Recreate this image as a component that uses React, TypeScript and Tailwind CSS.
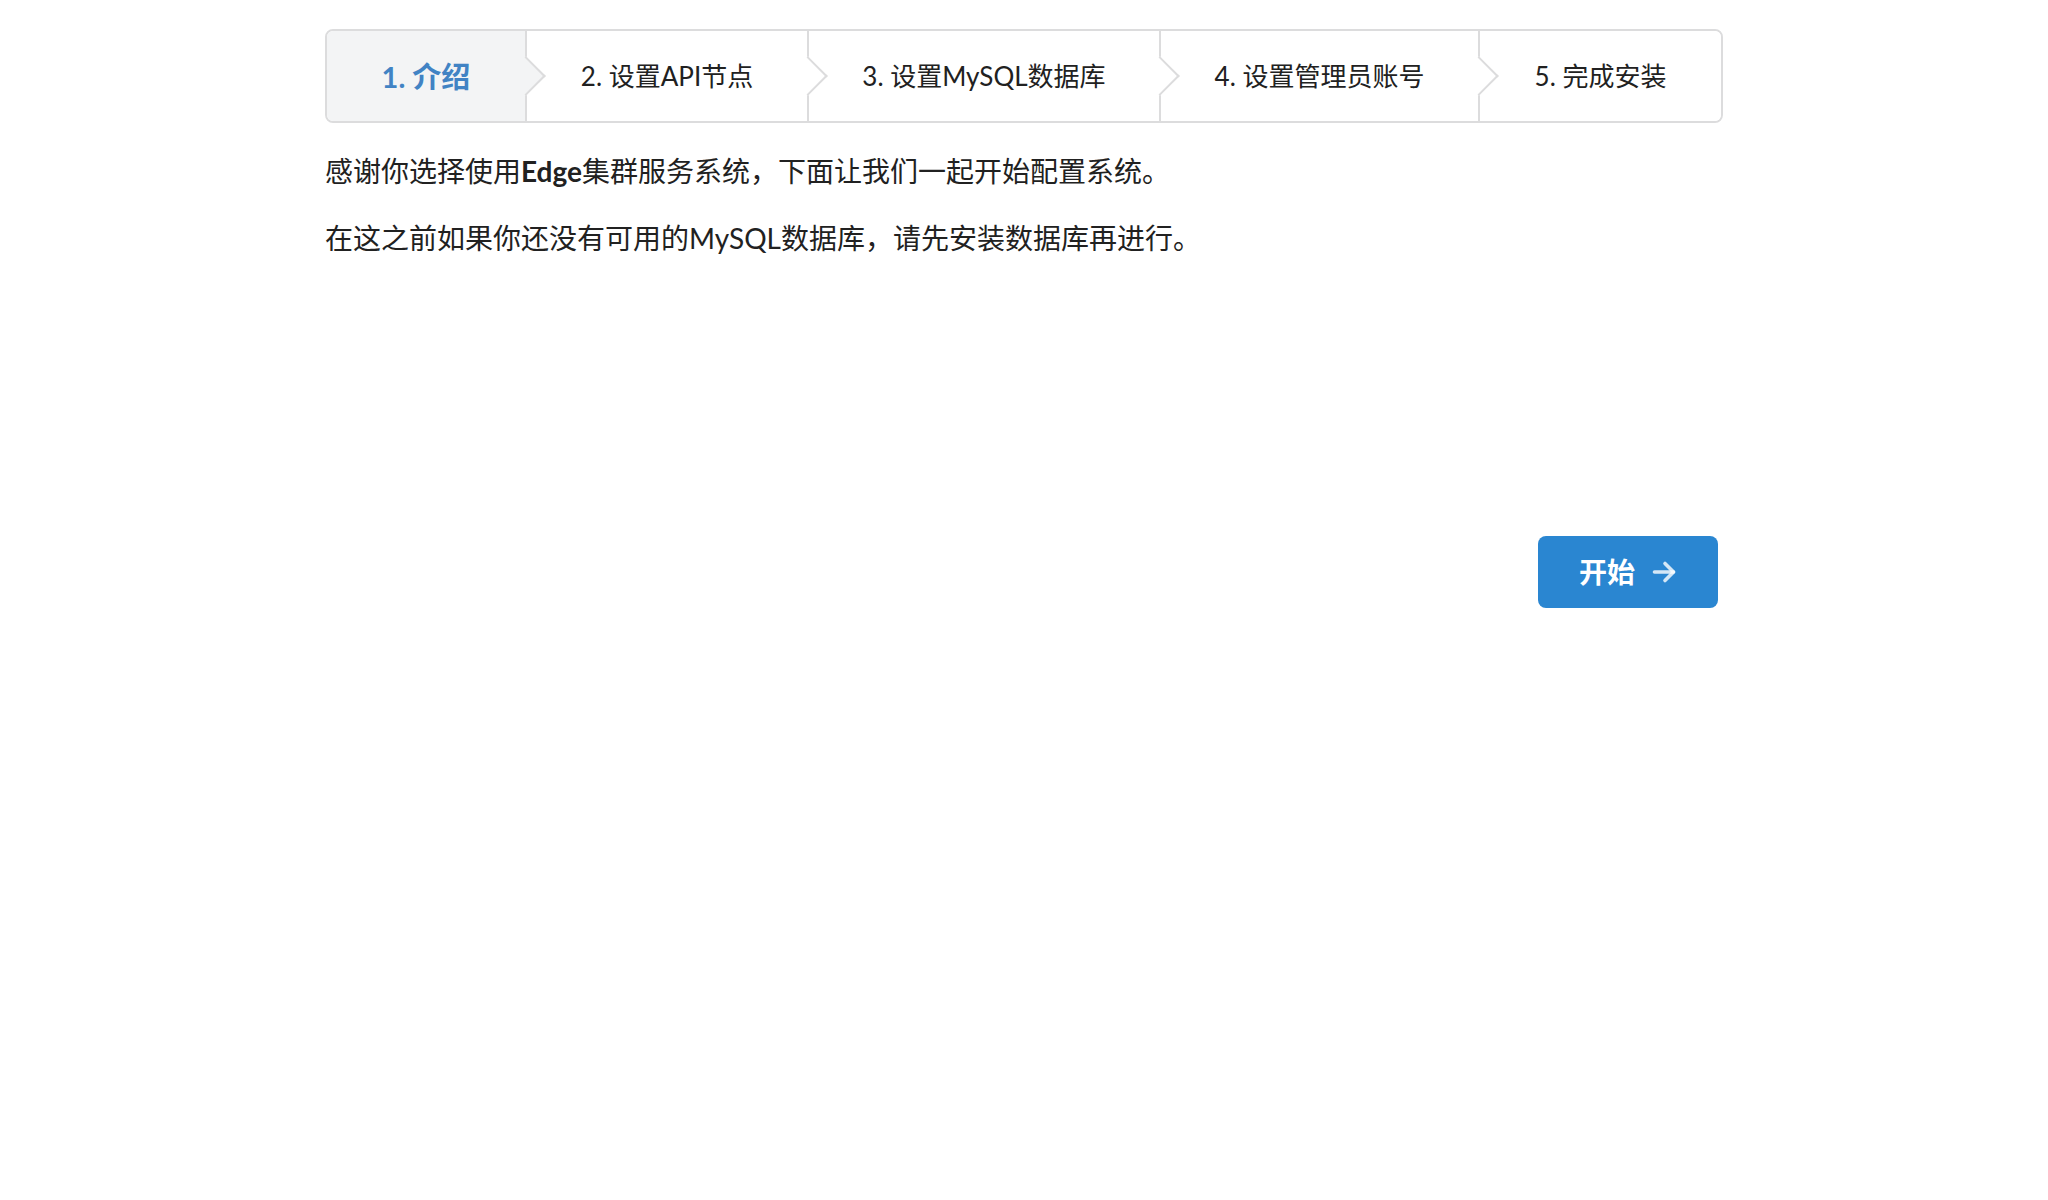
import React from "react";

const steps = [
  { label: "1. 介绍", width: "w-[200px]", z: "z-50" },
  { label: "2. 设置API节点", width: "w-[282px]", z: "z-40" },
  { label: "3. 设置MySQL数据库", width: "w-[352px]", z: "z-30" },
  { label: "4. 设置管理员账号", width: "w-[319px]", z: "z-20" },
  { label: "5. 完成安装", width: "w-[241px]", z: "z-10" },
];

function Steps() {
  return (
    <div className="flex h-[94px] w-[1398px] rounded-[8px] border-2 border-[#dcdcdd] overflow-hidden">
      {steps.map((step, i) => {
        const active = i === 0;
        const last = i === steps.length - 1;
        return (
          <div
            key={step.label}
            className={
              "relative flex items-center justify-center shrink-0 " +
              step.width +
              " " +
              step.z +
              (last ? "" : " border-r-2 border-[#dcdcdd]") +
              (active ? " bg-[#f3f4f5]" : " bg-white")
            }
          >
            <span
              className={
                "leading-none " +
                (active
                  ? "text-[29px] font-bold text-[#4183c4]"
                  : "text-[26px] text-[#212121]")
              }
            >
              {step.label}
            </span>
            {/* arrow to the next step */}
            {!last && (
              <div
                className={
                  "absolute top-1/2 right-[-1px] w-[28px] h-[28px] translate-x-1/2 -translate-y-1/2 rotate-45 border-t-2 border-r-2 border-[#dcdcdd] " +
                  (active ? "bg-[#f3f4f5]" : "bg-white")
                }
              />
            )}
          </div>
        );
      })}
    </div>
  );
}

export default function App() {
  return (
    <div className="min-h-[1200px] bg-white font-['Lato','Noto_Sans_CJK_SC',sans-serif] text-[#212121]">
      <div className="ml-[325px] w-[1398px] pt-[29px]">
        <Steps />

        <div className="mt-[28px] text-[28px] leading-[40px]">
          <p className="mb-[27px]">
            感谢你选择使用<b className="font-bold">Edge</b>集群服务系统，下面让我们一起开始配置系统。
          </p>
          <p>在这之前如果你还没有可用的MySQL数据库，请先安装数据库再进行。</p>
        </div>

        <div className="mt-[278px] flex justify-end pr-[5px]">
          <button className="flex h-[72px] w-[180px] items-center justify-center gap-[17px] rounded-[8px] bg-[#2a86d1] text-[28px] font-bold text-white">
            <span className="leading-none">开始</span>
            <svg
              width="25"
              height="24"
              viewBox="0 0 25 24"
              className="text-white/80"
              fill="none"
              stroke="currentColor"
              strokeWidth="3.6"
              strokeLinecap="round"
              strokeLinejoin="round"
            >
              <path d="M2.5 12h19" />
              <path d="M13 3.5l8.5 8.5-8.5 8.5" />
            </svg>
          </button>
        </div>
      </div>
    </div>
  );
}
